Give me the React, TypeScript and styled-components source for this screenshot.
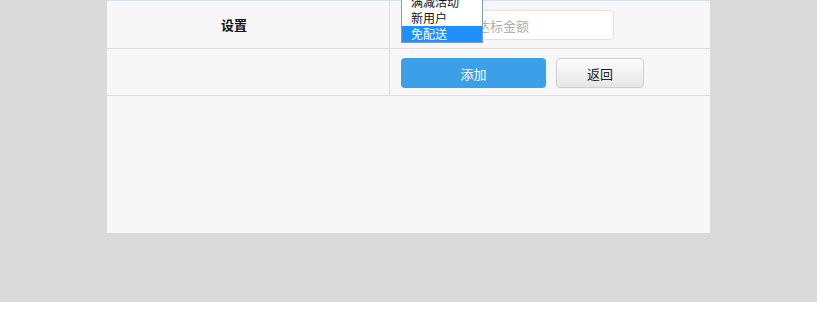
import styled, { createGlobalStyle } from 'styled-components';

const GlobalStyle = createGlobalStyle`
    body {
        margin: 0;
        background: #ffffff;
        font-family: "Liberation Sans", "Noto Sans CJK SC", sans-serif;
        font-size: 13px;
        color: #222;
    }
`;

const Page = () => {
    return (
        <>
            <GlobalStyle />
            <Backdrop>
                <Panel>
                    <Table>
                        <Row>
                            <LabelCell>设置</LabelCell>
                            <FieldCell>
                                <FieldWrap>
                                    <AmountInput placeholder="请输入满减达标金额" />
                                    <DropList>
                                        <DropItem>满减活动</DropItem>
                                        <DropItem>新用户</DropItem>
                                        <DropItem $active>免配送</DropItem>
                                    </DropList>
                                </FieldWrap>
                            </FieldCell>
                        </Row>
                        <Row>
                            <LabelCell />
                            <FieldCell>
                                <ButtonRow>
                                    <PrimaryButton>添加</PrimaryButton>
                                    <BackButton>返回</BackButton>
                                </ButtonRow>
                            </FieldCell>
                        </Row>
                    </Table>
                </Panel>
            </Backdrop>
        </>
    );
};

export default Page;

const Backdrop = styled.div`
    height: 302px;
    background: #dadada;
    display: flex;
    justify-content: center;
    align-items: flex-start;
`;

const Panel = styled.div`
    width: 603px;
    height: 233px;
    background: #f7f7f7;
    border-top: 1px solid #d6e2ef;
    box-sizing: border-box;
`;

const Table = styled.div`
    display: flex;
    flex-direction: column;
`;

const Row = styled.div`
    display: grid;
    grid-template-columns: 283px 1fr;
    height: 47px;
    border-bottom: 1px solid #dcdcdc;
    &:nth-child(2) {
        height: 46px;
    }
`;

const LabelCell = styled.div`
    display: flex;
    align-items: center;
    justify-content: center;
    border-right: 1px solid #dcdcdc;
    padding-right: 28px;
    font-family: "Noto Sans CJK SC", sans-serif;
    font-size: 13px;
    font-weight: bold;
    color: #111;
`;

const FieldCell = styled.div`
    display: flex;
    align-items: center;
    padding-left: 11px;
`;

const FieldWrap = styled.div`
    position: relative;
    display: flex;
    margin-top: 1px;
`;

const AmountInput = styled.input`
    width: 213px;
    height: 30px;
    box-sizing: border-box;
    border: 1px solid #e2e2e2;
    border-radius: 4px;
    background: #fff;
    padding: 0 10px;
    font-family: "Noto Sans CJK SC", sans-serif;
    font-size: 13px;
    outline: none;
    &::placeholder {
        color: #b0b0b0;
    }
`;

const DropList = styled.ul`
    position: absolute;
    left: 0;
    top: -17px;
    width: 82px;
    margin: 0;
    padding: 0;
    list-style: none;
    background: #fff;
    border: 1px solid #7f9db9;
    box-sizing: border-box;
`;

const DropItem = styled.li<{ $active?: boolean }>`
    height: 16px;
    line-height: 16px;
    padding-left: 9px;
    font-family: "Noto Sans CJK SC", sans-serif;
    font-size: 12px;
    background: ${(p) => (p.$active ? '#1e90ff' : 'transparent')};
    color: ${(p) => (p.$active ? '#fff' : '#111')};
`;

const ButtonRow = styled.div`
    display: flex;
    gap: 10px;
    margin-top: 2px;
`;

const PrimaryButton = styled.button`
    width: 145px;
    height: 30px;
    border: none;
    border-radius: 4px;
    background: #3ca0e8;
    color: #fff;
    font-family: "Noto Sans CJK SC", sans-serif;
    font-size: 13px;
    cursor: pointer;
`;

const BackButton = styled.button`
    width: 88px;
    height: 30px;
    border: 1px solid #cfcfcf;
    border-radius: 4px;
    background: linear-gradient(#fdfdfd, #e6e6e6);
    color: #222;
    font-family: "Noto Sans CJK SC", sans-serif;
    font-size: 13px;
    cursor: pointer;
`;
